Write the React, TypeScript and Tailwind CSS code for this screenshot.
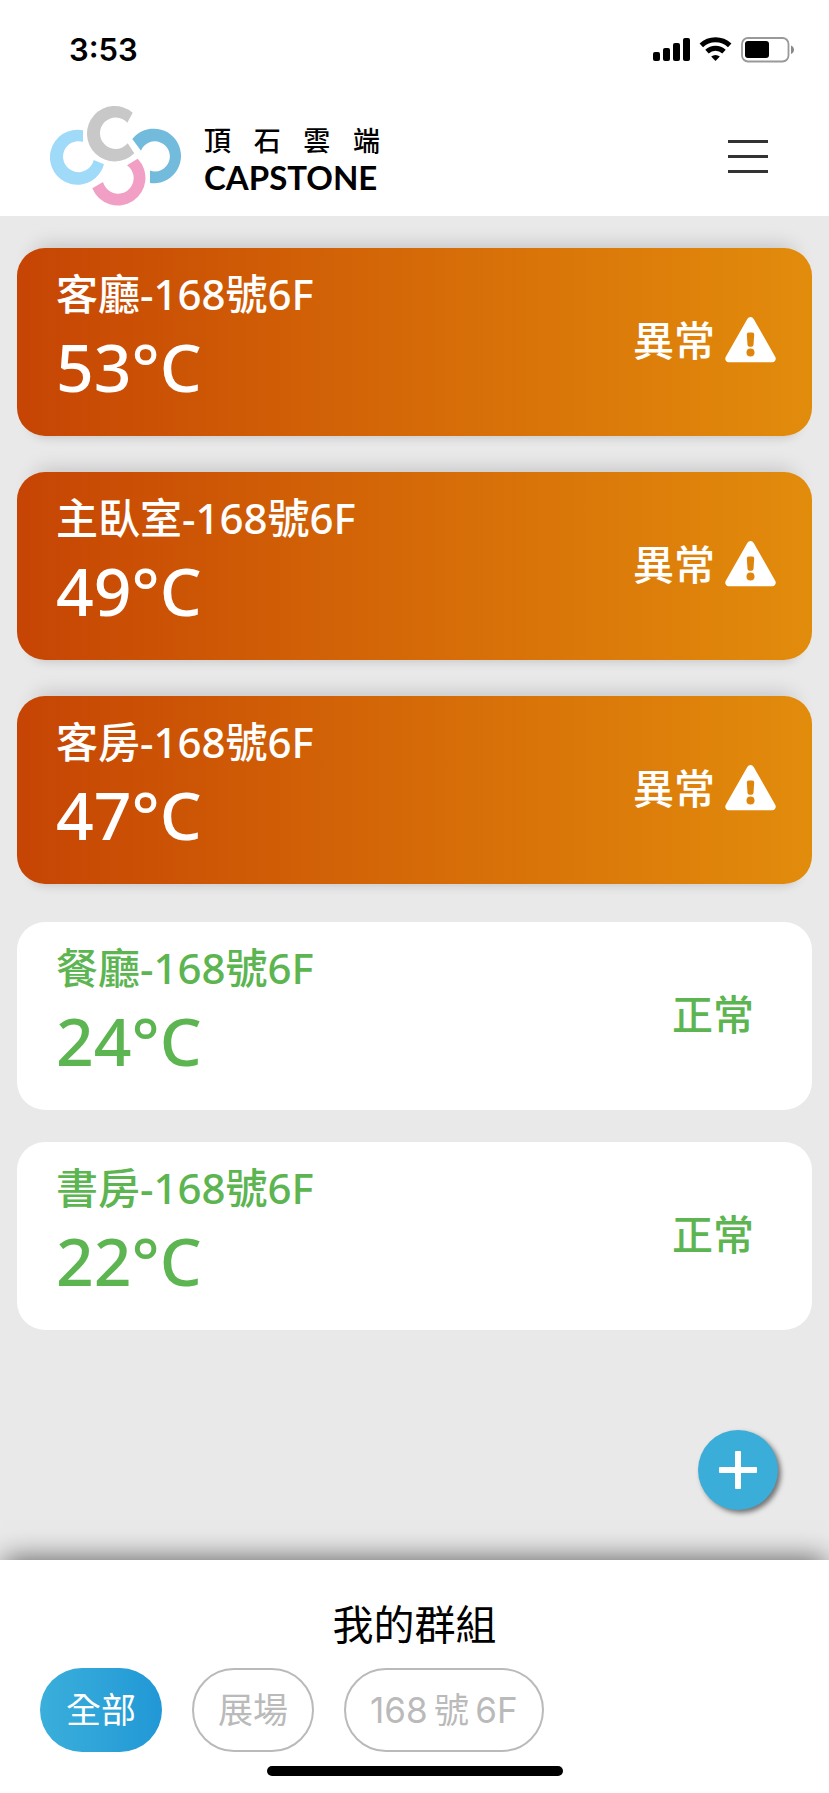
import { useState } from "react";

interface Room {
  name: string;
  temp: number;
}

const alertRooms: Room[] = [
  { name: "客廳-168號6F", temp: 53 },
  { name: "主臥室-168號6F", temp: 49 },
  { name: "客房-168號6F", temp: 47 },
];

const normalRooms: Room[] = [
  { name: "餐廳-168號6F", temp: 24 },
  { name: "書房-168號6F", temp: 22 },
];

// thin spaces around 號
const groups = ["全部", "展場", "168\u2009號\u20096F"];

function StatusBar() {
  return (
    <div className="flex h-25 items-center justify-between pr-[35px] pl-[69px]">
      <span className="font-['Inter',sans-serif] text-[31px] leading-10 font-semibold">3:53</span>
      <svg width="141" height="26" viewBox="0 0 141 26" aria-hidden="true">
        <rect x="0" y="15" width="7" height="9" rx="2" />
        <rect x="10" y="11" width="7" height="13" rx="2" />
        <rect x="20" y="6" width="7" height="18" rx="2" />
        <rect x="30" y="1" width="7" height="23" rx="2" />
        <g fill="none" stroke="#000" strokeWidth="5">
          <path d="M48.3 8.4a20.6 20.6 0 0 1 28.4 0" />
          <path d="M54 14.6a12.4 12.4 0 0 1 17 0" />
        </g>
        <path d="M62.5 24l-4.3-4.4a6.3 6.3 0 0 1 8.6 0z" />
        <rect x="89" y="1" width="46.5" height="23.5" rx="6" fill="none" stroke="#999" strokeWidth="1.8" />
        <rect x="92" y="4" width="24" height="17" rx="3" />
        <path d="M138 8.6c4 1.6 4 6.8 0 8.4z" fill="#888" />
      </svg>
    </div>
  );
}

function Logo() {
  return (
    <a href="#" className="flex items-center gap-[23px]">
      <svg width="131" height="100" viewBox="50 106 131 100" aria-hidden="true">
        <path d="M83 130.3A27.5 27.5 0 1 0 104 164.3L93.7 160A15.5 15.5 0 1 1 83 141.8Z" fill="#9fdaf8" />
        <path d="M132.7 112.7A27.7 27.7 0 1 0 134.3 153.3L127.7 143.3A15.7 15.7 0 1 1 127.3 122.7Z" fill="#c8c8c8" />
        <path d="M132.3 139A27.3 27.3 0 1 1 150 183L150 170.6A15 15 0 1 0 141 150.7Z" fill="#72bbdd" />
        <path d="M137.7 158.7A27.6 27.6 0 1 1 92.3 188.3L103 182A15.6 15.6 0 1 0 127 165.3Z" fill="#f19fc5" />
      </svg>
      <div className="w-44 pt-1.5">
        <div className="flex justify-between text-[27px] leading-9 font-medium">
          <span>頂</span>
          <span>石</span>
          <span>雲</span>
          <span>端</span>
        </div>
        <div className="font-['Lato',sans-serif] text-[33px] leading-9 font-bold">CAPSTONE</div>
      </div>
    </a>
  );
}

function WarningIcon() {
  return (
    <svg width="51" height="46" viewBox="0 0 51 46" aria-hidden="true">
      <path
        d="M22.3 1.9a3.7 3.7 0 0 1 6.4 0L50.2 39.7a3.7 3.7 0 0 1-3.2 5.6H4a3.7 3.7 0 0 1-3.2-5.6z"
        fill="#fff"
      />
      <path d="M21.8 17.5a2 2 0 0 1 2-2h3.4a2 2 0 0 1 2 2l-.7 10.5a2 2 0 0 1-2 1.8h-2a2 2 0 0 1-2-1.8z" fill="#de850c" />
      <circle cx="25.5" cy="35.5" r="4" fill="#de850c" />
    </svg>
  );
}

function RoomInfo({ room }: { room: Room }) {
  return (
    <div className="pb-2">
      <h2 className="text-[42px] leading-[60px] font-medium">{room.name}</h2>
      <p className="text-[66px] leading-[84px] font-medium">{room.temp}°C</p>
    </div>
  );
}

export default function App() {
  const [active, setActive] = useState(groups[0]);

  return (
    <div className="flex min-h-screen flex-col bg-white font-['Noto_Sans','Noto_Sans_CJK_TC',sans-serif] text-black">
      <header>
        <StatusBar />
        <div className="flex h-29 items-center justify-between pr-[61px] pb-1 pl-[50px]">
          <Logo />
          <button type="button" aria-label="選單" className="flex flex-col gap-3">
            <span className="h-[3px] w-10 bg-[#333]" />
            <span className="h-[3px] w-10 bg-[#333]" />
            <span className="h-[3px] w-10 bg-[#333]" />
          </button>
        </div>
      </header>

      <main className="flex flex-1 flex-col bg-[#e9e9e9] px-[17px] pt-8">
        {/* 異常 */}
        <ul className="flex flex-col gap-9">
          {alertRooms.map((room) => (
            <li
              key={room.name}
              className="flex h-[188px] items-center justify-between rounded-[28px] bg-linear-to-r from-[#c64404] to-[#e28c0c] pr-9 pb-1 pl-[39px] text-white shadow-[0_-20px_20px_-18px_rgba(0,0,0,0.18),0_14px_12px_-14px_rgba(0,0,0,0.2)]"
            >
              <RoomInfo room={room} />
              <div className="flex items-center gap-[10px]">
                <span className="text-[41px] leading-[60px] font-medium">異常</span>
                <WarningIcon />
              </div>
            </li>
          ))}
        </ul>

        {/* 正常 */}
        <ul className="mt-[38px] flex flex-col gap-8">
          {normalRooms.map((room) => (
            <li
              key={room.name}
              className="flex h-[188px] items-center justify-between rounded-[28px] bg-white pr-[58px] pb-1 pl-[39px] text-[#5cb551]"
            >
              <RoomInfo room={room} />
              <span className="text-[41px] leading-[60px] font-medium">正常</span>
            </li>
          ))}
        </ul>

        <button
          type="button"
          aria-label="新增"
          className="mt-auto mr-[34px] mb-[50px] flex size-20 items-center justify-center self-end rounded-full bg-[#3aadd9] shadow-[3px_3px_5px_rgba(0,0,0,0.5)]"
        >
          <svg width="38" height="38" viewBox="0 0 38 38" fill="#fff" aria-hidden="true">
            <rect x="16" y="0" width="6" height="38" rx="1" />
            <rect x="0" y="16" width="38" height="6" rx="1" />
          </svg>
        </button>
      </main>

      <footer className="bg-white px-10 pt-[34px] pb-[17px] shadow-[0_-5px_26px_-4px_rgba(0,0,0,0.6)]">
        <h2 className="text-center text-[41px] leading-[60px] font-normal">我的群組</h2>
        <div className="mt-[14px] flex gap-[30px] font-['Inter','Noto_Sans_CJK_TC',sans-serif] text-[35px] leading-[50px] font-normal">
          {groups.map((group) => (
            <button
              key={group}
              type="button"
              onClick={() => setActive(group)}
              className={
                active === group
                  ? "h-[84px] rounded-full bg-linear-to-r from-[#3aafdb] to-[#2198d6] px-[26px] text-white"
                  : "h-[84px] rounded-full border-2 border-[#bababa] px-6 text-[#bababa]"
              }
            >
              {group}
            </button>
          ))}
        </div>
        <div className="mx-auto mt-[14px] h-[10px] w-[296px] rounded-full bg-black" />
      </footer>
    </div>
  );
}
